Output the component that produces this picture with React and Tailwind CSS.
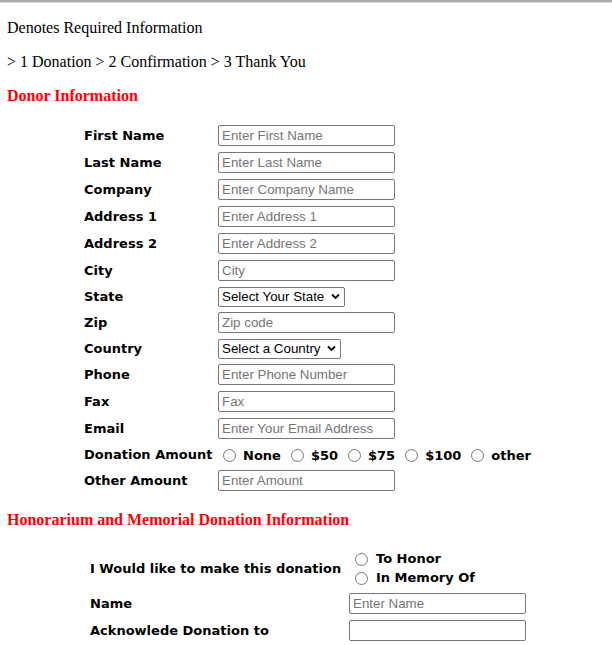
const donor = [
  { label: "First Name", ph: "Enter First Name" },
  { label: "Last Name", ph: "Enter Last Name" },
  { label: "Company", ph: "Enter Company Name" },
  { label: "Address 1", ph: "Enter Address 1" },
  { label: "Address 2", ph: "Enter Address 2" },
  { label: "City", ph: "City" },
  { label: "State", select: "Select Your State", w: "w-[127px]" },
  { label: "Zip", ph: "Zip code" },
  { label: "Country", select: "Select a Country", w: "w-[123px]" },
  { label: "Phone", ph: "Enter Phone Number" },
  { label: "Fax", ph: "Fax" },
  { label: "Email", ph: "Enter Your Email Address" },
];

const amounts = ["None", "$50", "$75", "$100", "other"];

function TextBox({ ph }) {
  return (
    <input
      type="text"
      placeholder={ph}
      className="h-[21px] w-[177px] rounded-[2px] border border-[#767676] bg-white px-[3px] font-['Liberation_Sans',Arial,sans-serif] text-[13.33px] font-normal text-black outline-none placeholder:text-[#757575]"
    />
  );
}

function Chevron() {
  return (
    <svg
      className="pointer-events-none absolute right-[5px] top-[6px]"
      width="9"
      height="7"
      viewBox="0 0 9 7"
    >
      <path d="M1 1.5 L4.5 5 L8 1.5" fill="none" stroke="#000" strokeWidth="1.8" />
    </svg>
  );
}

function SelectBox({ text, w }) {
  return (
    <div className={`relative h-[20px] ${w}`}>
      <select className="h-[20px] w-full appearance-none rounded-[2px] border border-[#767676] bg-white pl-[3px] pr-[16px] font-['Liberation_Sans',Arial,sans-serif] text-[13.33px] font-normal leading-[18px] text-black outline-none">
        <option>{text}</option>
      </select>
      <Chevron />
    </div>
  );
}

function Radio({ name, className }) {
  return (
    <input
      type="radio"
      name={name}
      className={`m-0 h-[13px] w-[13px] shrink-0 ${className}`}
    />
  );
}

export default function App() {
  return (
    <div className="min-h-[645px] w-[612px] overflow-hidden bg-white font-['DejaVu_Sans',Verdana,sans-serif] text-black">
      <div className="h-[2px] bg-[#acacac]" />
      <div className="h-px bg-[#dadada]" />

      <div className="px-[7px] font-['Liberation_Serif','Times_New_Roman',serif] text-[16px] leading-[18px]">
        <p className="mt-[16px]">Denotes Required Information</p>
        <p className="mt-[16px]">&gt; 1 Donation &gt; 2 Confirmation &gt; 3 Thank You</p>
        <h2 className="mt-[16px] font-bold text-[#ff0000]">Donor Information</h2>
      </div>

      <div className="mt-[17px] pl-[84px] text-[13px] font-bold">
        {donor.map((r) => (
          <div
            key={r.label}
            className={`flex items-center ${r.select ? "h-[25px]" : "h-[27px]"}`}
          >
            <div className="w-[134px]">{r.label}</div>
            {r.select ? <SelectBox text={r.select} w={r.w} /> : <TextBox ph={r.ph} />}
          </div>
        ))}
        <div className="flex h-[25px] items-center">
          <div className="w-[134px] whitespace-nowrap">Donation Amount</div>
          <div className="flex items-center whitespace-nowrap pt-[2px]">
            {amounts.map((a, i) => (
              <label key={a} className="flex items-center">
                <Radio
                  name="amount"
                  className={i === 0 ? "ml-[5px] mr-[7px]" : "ml-[10px] mr-[7px]"}
                />
                {a}
              </label>
            ))}
          </div>
        </div>
        <div className="flex h-[27px] items-center">
          <div className="w-[134px]">Other Amount</div>
          <TextBox ph="Enter Amount" />
        </div>
      </div>

      <h2 className="mt-[17px] px-[7px] font-['Liberation_Serif','Times_New_Roman',serif] text-[16px] font-bold leading-[18px] text-[#ff0000]">
        Honorarium and Memorial Donation Information
      </h2>

      <div className="mt-[18px] pl-[90px] text-[13px] font-bold">
        <div className="flex h-[43px] items-center">
          <div className="w-[259px]">I Would like to make this donation</div>
          <div className="flex flex-col">
            <label className="flex h-[19px] items-center">
              <Radio name="honor" className="ml-[6px] mr-[8px]" />
              To Honor
            </label>
            <label className="flex h-[19px] items-center">
              <Radio name="honor" className="ml-[6px] mr-[8px]" />
              In Memory Of
            </label>
          </div>
        </div>
        <div className="flex h-[27px] items-center">
          <div className="w-[259px]">Name</div>
          <TextBox ph="Enter Name" />
        </div>
        <div className="flex h-[27px] items-center">
          <div className="w-[259px]">Acknowlede Donation to</div>
          <TextBox ph="" />
        </div>
      </div>
    </div>
  );
}
